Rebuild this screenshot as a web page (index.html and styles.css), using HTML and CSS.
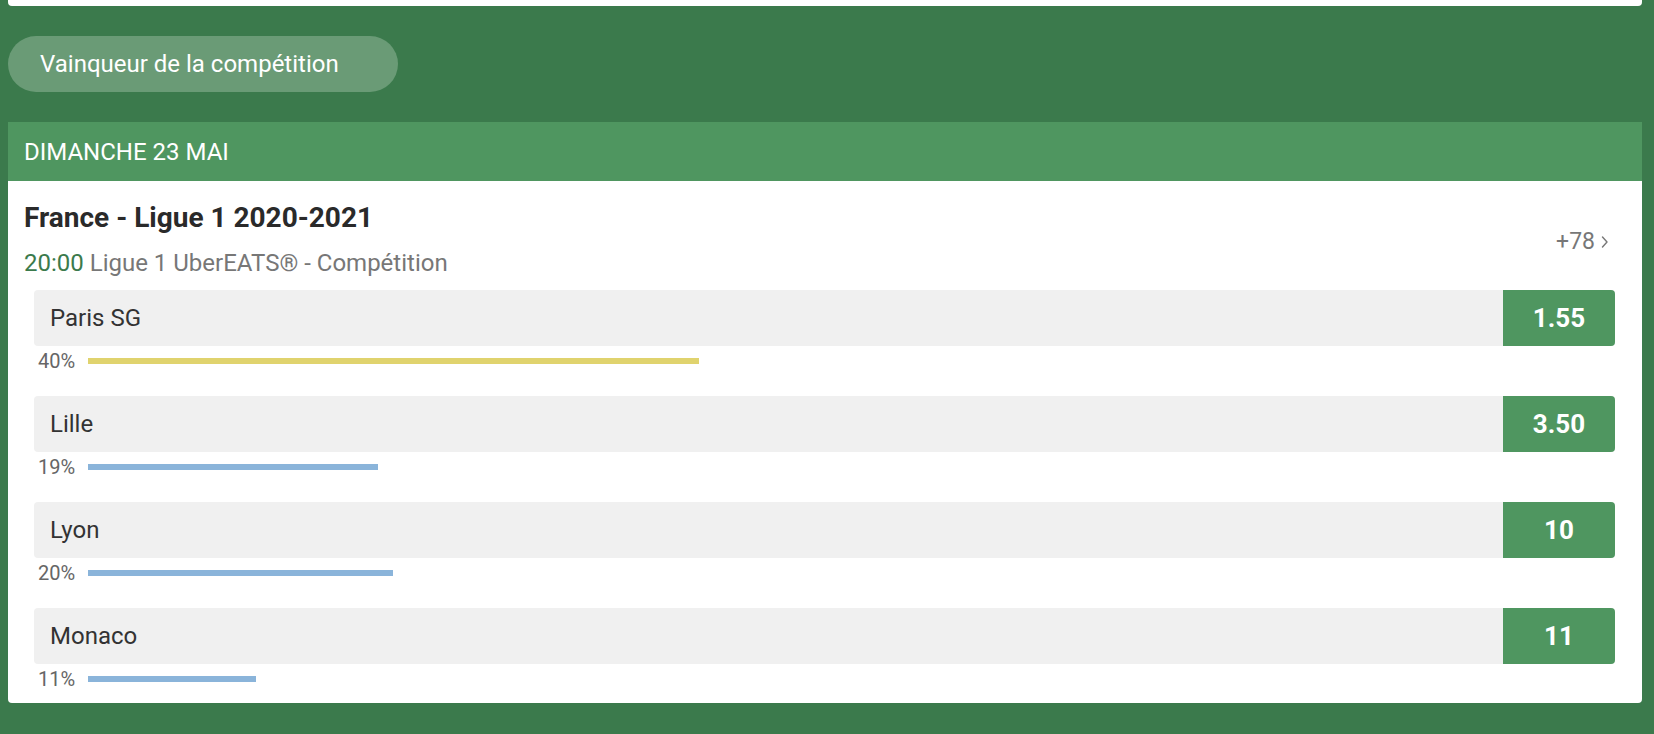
FILE: index.html
```html
<!DOCTYPE html>
<html lang="fr">

<head>
    <meta charset="UTF-8">
    <meta name="viewport" content="width=device-width, initial-scale=1.0">
    <title>Ligue 1 - Vainqueur</title>
    <link rel="stylesheet" href="styles.css">
</head>

<body>
    <div class="prev-card"></div>

    <div class="filters">
        <button class="pill">Vainqueur de la compétition</button>
    </div>

    <section class="day">
        <h2 class="day-title">Dimanche 23 mai</h2>
        <div class="event">
            <div class="event-head">
                <div>
                    <h3 class="event-name">France - Ligue 1 2020-2021</h3>
                    <div class="event-meta"><span class="time">20:00</span> Ligue 1 UberEATS® - Compétition</div>
                </div>
                <a class="more" href="#">+78
                    <svg width="8" height="14" viewBox="0 0 8 14" fill="none">
                        <path d="M1.5 2 L6 7 L1.5 12" stroke="#777" stroke-width="1.4" stroke-linecap="round" stroke-linejoin="round" />
                    </svg>
                </a>
            </div>

            <div class="outcomes">
                <div class="outcome">
                    <div class="row">
                        <span class="team">Paris SG</span>
                        <span class="odd">1.55</span>
                    </div>
                    <div class="pct">
                        <span class="pct-label">40%</span>
                        <div class="track"><div class="bar bar-fav" style="width: 40%"></div></div>
                    </div>
                </div>
                <div class="outcome">
                    <div class="row">
                        <span class="team">Lille</span>
                        <span class="odd">3.50</span>
                    </div>
                    <div class="pct">
                        <span class="pct-label">19%</span>
                        <div class="track"><div class="bar" style="width: 19%"></div></div>
                    </div>
                </div>
                <div class="outcome">
                    <div class="row">
                        <span class="team">Lyon</span>
                        <span class="odd">10</span>
                    </div>
                    <div class="pct">
                        <span class="pct-label">20%</span>
                        <div class="track"><div class="bar" style="width: 20%"></div></div>
                    </div>
                </div>
                <div class="outcome">
                    <div class="row">
                        <span class="team">Monaco</span>
                        <span class="odd">11</span>
                    </div>
                    <div class="pct">
                        <span class="pct-label">11%</span>
                        <div class="track"><div class="bar" style="width: 11%"></div></div>
                    </div>
                </div>
            </div>
        </div>
    </section>
</body>

</html>
```

FILE: styles.css
```css
* {
    box-sizing: border-box;
    padding: 0;
    margin: 0;
}

html,
body {
    width: 100%;
    height: 100%;
}

body {
    background: #3b7a4c;
    padding: 0 12px 0 8px;
    font-family: Roboto, "Liberation Sans", sans-serif;
    color: #333;
    overflow: hidden;
}

.prev-card {
    height: 6px;
    background: #fff;
    border-radius: 0 0 4px 4px;
}

.filters {
    padding: 30px 0;
}

.pill {
    height: 56px;
    padding: 0 32px;
    border: none;
    border-radius: 28px;
    background: #6a9b76;
    color: #fff;
    font-family: inherit;
    font-size: 24px;
    width: 390px;
    text-align: left;
}

.day-title {
    height: 59px;
    display: flex;
    align-items: center;
    padding: 0 16px;
    background: #4f9660;
    color: #fff;
    font-size: 24px;
    font-weight: 400;
    text-transform: uppercase;
}

.event {
    background: #fff;
    border-radius: 0 0 4px 4px;
    padding: 19px 0 9px;
}

.event-head {
    display: flex;
    justify-content: space-between;
    align-items: center;
    padding: 0 33px 0 16px;
}

.event-name {
    font-size: 28px;
    line-height: 36px;
    font-weight: 700;
    color: #2a2a2a;
}

.event-meta {
    margin-top: 11px;
    font-size: 24px;
    line-height: 32px;
    color: #777;
}

.time {
    color: #3b7a4c;
}

.more {
    display: flex;
    align-items: center;
    gap: 6px;
    padding-top: 4px;
    font-size: 23px;
    color: #777;
    text-decoration: none;
}

.outcomes {
    padding: 11px 27px 0 26px;
    display: flex;
    flex-direction: column;
    gap: 20px;
}

.row {
    height: 56px;
    display: flex;
    align-items: center;
    background: #f0f0f0;
    border-radius: 4px;
    overflow: hidden;
}

.team {
    flex: 1;
    padding-left: 16px;
    font-size: 24px;
}

.odd {
    width: 112px;
    height: 100%;
    display: flex;
    align-items: center;
    justify-content: center;
    background: #4f9660;
    color: #fff;
    font-size: 26px;
    font-weight: 700;
}

.pct {
    height: 30px;
    display: flex;
    align-items: center;
}

.pct-label {
    width: 54px;
    padding-left: 4px;
    font-size: 20px;
    color: #666;
}

.track {
    flex: 1;
}

.bar {
    height: 6px;
    background: #8ab4da;
}

.bar-fav {
    background: #e0d36e;
}
```
